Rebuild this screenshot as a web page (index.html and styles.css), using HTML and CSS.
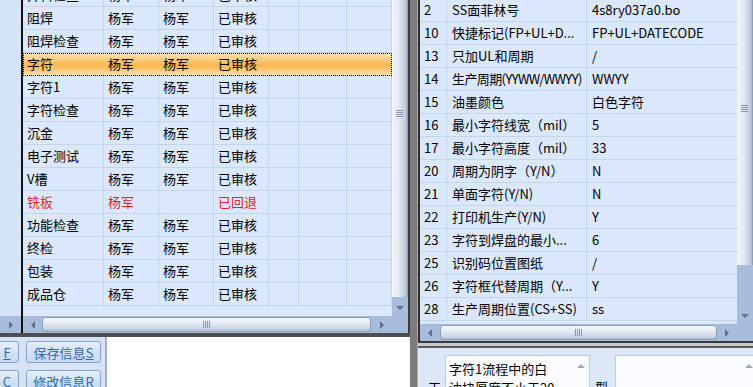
FILE: index.html
```html
<!DOCTYPE html>
<html>

<head>
    <title>流程审核</title>
    <link rel="stylesheet" href="styles.css">
</head>

<body>
    <div class="app">
        <div class="left-pane">
            <div class="left-top">
                <div class="side-strip">
                    <div class="side-fill"></div>
                    <div class="side-scroll"><span class="tri tri-right"></span></div>
                </div>
                <div class="grid-box">
                    <div class="grid-main">
                        <div class="grid-body">
                            <div class="rows">
                                <div class="row"><div class="cell">开料检查</div><div class="cell">杨军</div><div class="cell">杨军</div><div class="cell">已审核</div><div class="cell"></div><div class="cell"></div><div class="cell"></div></div>
                                <div class="row"><div class="cell">阻焊</div><div class="cell">杨军</div><div class="cell">杨军</div><div class="cell">已审核</div><div class="cell"></div><div class="cell"></div><div class="cell"></div></div>
                                <div class="row"><div class="cell">阻焊检查</div><div class="cell">杨军</div><div class="cell">杨军</div><div class="cell">已审核</div><div class="cell"></div><div class="cell"></div><div class="cell"></div></div>
                                <div class="row current"><div class="cell">字符</div><div class="cell">杨军</div><div class="cell">杨军</div><div class="cell">已审核</div><div class="cell"></div><div class="cell"></div><div class="cell"></div></div>
                                <div class="row"><div class="cell">字符1</div><div class="cell">杨军</div><div class="cell">杨军</div><div class="cell">已审核</div><div class="cell"></div><div class="cell"></div><div class="cell"></div></div>
                                <div class="row"><div class="cell">字符检查</div><div class="cell">杨军</div><div class="cell">杨军</div><div class="cell">已审核</div><div class="cell"></div><div class="cell"></div><div class="cell"></div></div>
                                <div class="row"><div class="cell">沉金</div><div class="cell">杨军</div><div class="cell">杨军</div><div class="cell">已审核</div><div class="cell"></div><div class="cell"></div><div class="cell"></div></div>
                                <div class="row"><div class="cell">电子测试</div><div class="cell">杨军</div><div class="cell">杨军</div><div class="cell">已审核</div><div class="cell"></div><div class="cell"></div><div class="cell"></div></div>
                                <div class="row"><div class="cell">V槽</div><div class="cell">杨军</div><div class="cell">杨军</div><div class="cell">已审核</div><div class="cell"></div><div class="cell"></div><div class="cell"></div></div>
                                <div class="row returned"><div class="cell">铣板</div><div class="cell">杨军</div><div class="cell"></div><div class="cell">已回退</div><div class="cell"></div><div class="cell"></div><div class="cell"></div></div>
                                <div class="row"><div class="cell">功能检查</div><div class="cell">杨军</div><div class="cell">杨军</div><div class="cell">已审核</div><div class="cell"></div><div class="cell"></div><div class="cell"></div></div>
                                <div class="row"><div class="cell">终检</div><div class="cell">杨军</div><div class="cell">杨军</div><div class="cell">已审核</div><div class="cell"></div><div class="cell"></div><div class="cell"></div></div>
                                <div class="row"><div class="cell">包装</div><div class="cell">杨军</div><div class="cell">杨军</div><div class="cell">已审核</div><div class="cell"></div><div class="cell"></div><div class="cell"></div></div>
                                <div class="row"><div class="cell">成品仓</div><div class="cell">杨军</div><div class="cell">杨军</div><div class="cell">已审核</div><div class="cell"></div><div class="cell"></div><div class="cell"></div></div>
                            </div>
                        </div>
                        <div class="vscroll left-vscroll">
                            <div class="vthumb"><span class="grip-v"><i></i><i></i><i></i><i></i></span></div>
                            <div class="vtrack"><div class="arrow-box"><span class="tri tri-down"></span></div></div>
                        </div>
                    </div>
                    <div class="hscroll-row">
                        <div class="hscroll">
                            <div class="harrow harrow-l"><span class="tri tri-left"></span></div>
                            <div class="hthumb left-hthumb"><span class="grip-h"><i></i><i></i><i></i><i></i></span></div>
                            <div class="harrow harrow-r"><span class="tri tri-right"></span></div>
                        </div>
                        <div class="corner"></div>
                    </div>
                </div>
            </div>
            <div class="left-bottom">
                <div class="btn-col">
                    <div class="btn-row">
                        <button class="btn btn-cut"><u>F</u></button>
                        <button class="btn">保存信息<u>S</u></button>
                    </div>
                    <div class="btn-row">
                        <button class="btn btn-cut"><u>C</u></button>
                        <button class="btn">修改信息<u>R</u></button>
                    </div>
                </div>
                <div class="blank"></div>
            </div>
        </div>

        <div class="splitter"></div>

        <div class="right-pane">
            <div class="right-top">
                <div class="rgrid-main">
                    <div class="rgrid-body">
                        <div class="rrows">
                            <div class="rrow"><div class="cell">2</div><div class="cell">SS面菲林号</div><div class="cell">4s8ry037a0.bo</div></div>
                            <div class="rrow"><div class="cell">10</div><div class="cell">快捷标记(FP+UL+D...</div><div class="cell">FP+UL+DATECODE</div></div>
                            <div class="rrow"><div class="cell">13</div><div class="cell">只加UL和周期</div><div class="cell">/</div></div>
                            <div class="rrow"><div class="cell">14</div><div class="cell tight">生产周期(YYWW/WWYY)</div><div class="cell">WWYY</div></div>
                            <div class="rrow"><div class="cell">15</div><div class="cell">油墨颜色</div><div class="cell">白色字符</div></div>
                            <div class="rrow"><div class="cell">16</div><div class="cell">最小字符线宽（mil）</div><div class="cell">5</div></div>
                            <div class="rrow"><div class="cell">17</div><div class="cell">最小字符高度（mil）</div><div class="cell">33</div></div>
                            <div class="rrow"><div class="cell">20</div><div class="cell">周期为阴字（Y/N）</div><div class="cell">N</div></div>
                            <div class="rrow"><div class="cell">21</div><div class="cell">单面字符(Y/N)</div><div class="cell">N</div></div>
                            <div class="rrow"><div class="cell">22</div><div class="cell">打印机生产(Y/N)</div><div class="cell">Y</div></div>
                            <div class="rrow"><div class="cell">23</div><div class="cell">字符到焊盘的最小...</div><div class="cell">6</div></div>
                            <div class="rrow"><div class="cell">25</div><div class="cell">识别码位置图纸</div><div class="cell">/</div></div>
                            <div class="rrow"><div class="cell">26</div><div class="cell">字符框代替周期（Y...</div><div class="cell">Y</div></div>
                            <div class="rrow"><div class="cell">28</div><div class="cell">生产周期位置(CS+SS)</div><div class="cell">ss</div></div>
                        </div>
                    </div>
                    <div class="vscroll right-vscroll">
                        <div class="vthumb"><span class="grip-v"><i></i><i></i><i></i><i></i></span></div>
                        <div class="vtrack"><div class="arrow-box"><span class="tri tri-down"></span></div></div>
                    </div>
                </div>
                <div class="hscroll-row">
                    <div class="hscroll rhscroll">
                        <div class="harrow rharrow"><span class="tri tri-left"></span></div>
                        <div class="hthumb right-hthumb"><span class="grip-h"><i></i><i></i><i></i><i></i></span></div>
                        <div class="harrow rharrow"><span class="tri tri-right"></span></div>
                    </div>
                    <div class="corner"></div>
                </div>
            </div>
            <div class="band"></div>
            <div class="rbottom">
                <div class="field-label">工</div>
                <div class="memo">
                    <div class="memo-text">字符1流程中的白油块厚度不小于20</div>
                    <div class="memo-bar"><span class="tri tri-up"></span></div>
                </div>
                <div class="field-label label-type">型</div>
                <div class="memo memo-wide">
                    <div class="memo-text"></div>
                    <div class="memo-bar"><span class="tri tri-up"></span></div>
                </div>
            </div>
        </div>
    </div>
</body>

</html>
```

FILE: styles.css
```css
* {
    box-sizing: border-box;
}

body {
    margin: 0;
    font-family: "Noto Sans CJK SC", "Liberation Sans", sans-serif;
    font-size: 13px;
    color: #000;
    background: #7c7c7c;
}

.app {
    display: flex;
    width: 753px;
    height: 387px;
    overflow: hidden;
}

/* left pane */
.left-pane {
    width: 410px;
    flex-shrink: 0;
    display: flex;
    flex-direction: column;
}

.left-top {
    height: 337px;
    display: flex;
    border-bottom: 4px solid #4e4e4e;
}

.side-strip {
    width: 21px;
    display: flex;
    flex-direction: column;
    background: #d4e3f7;
}

.side-fill {
    flex: 1;
}

.side-scroll {
    height: 17px;
    background: #a8bddb;
    display: flex;
    align-items: center;
    justify-content: center;
}

.grid-box {
    width: 389px;
    display: flex;
    flex-direction: column;
    border-left: 2px solid #111;
    border-right: 2px solid #3a3a3a;
}

.grid-main {
    height: 316px;
    display: flex;
}

.grid-body {
    width: 369px;
    overflow: hidden;
    background: #dbe8fb;
}

.rows {
    margin-top: -16px;
}

.row {
    display: grid;
    grid-template-columns: 81px 55px 55px 55px 30px 48px 45px;
    height: 23px;
    border-bottom: 1px solid #c4d4ec;
}

.cell {
    border-right: 1px solid #c4d4ec;
    padding-left: 4px;
    line-height: 22px;
    white-space: nowrap;
    overflow: hidden;
}

.row.current {
    background: linear-gradient(to bottom, #fde4b6 0%, #fbc46a 40%, #f8b650 55%, #fbd08a 85%, #fde0a8 100%);
    outline: 1px dotted #000;
    outline-offset: -1px;
}

.row.current .cell {
    border-right-color: transparent;
}

.row.returned {
    color: #e3232c;
}

/* scrollbars */
.vscroll {
    width: 16px;
    display: flex;
    flex-direction: column;
    background: #a8bddb;
}

.vthumb {
    background: linear-gradient(to right, #f3f6fa 0%, #e3e9f2 45%, #c3cfdf 85%, #a9b8cd 100%);
    border-right: 1px solid #8d9db6;
    display: flex;
    justify-content: center;
}

.left-vscroll .vthumb {
    height: 297px;
    padding-top: 110px;
}

.right-vscroll .vthumb {
    height: 265px;
    padding-top: 105px;
}

.vtrack {
    flex: 1;
    display: flex;
    flex-direction: column;
    justify-content: flex-end;
}

.arrow-box {
    height: 16px;
    display: flex;
    align-items: center;
    justify-content: center;
}

.grip-v {
    display: flex;
    flex-direction: column;
    gap: 1px;
}

.grip-v i {
    display: block;
    width: 7px;
    height: 1px;
    background: #8798b2;
}

.grip-h {
    display: flex;
    gap: 1px;
}

.grip-h i {
    display: block;
    width: 1px;
    height: 7px;
    background: #8798b2;
}

.hscroll-row {
    height: 17px;
    display: flex;
}

.hscroll {
    width: 369px;
    display: flex;
    background: #a8bddb;
}

.harrow {
    display: flex;
    align-items: center;
    justify-content: center;
}

.harrow-l {
    width: 19px;
}

.harrow-r {
    width: 21px;
}

.hthumb {
    height: 15px;
    margin-top: 1px;
    border: 1px solid #8a9dbb;
    border-radius: 3px;
    background: linear-gradient(to bottom, #f4f7fb 0%, #e4eaf3 45%, #c6d2e2 85%, #b1c0d4 100%);
    display: flex;
    align-items: center;
    justify-content: center;
}

.left-hthumb {
    width: 329px;
}

.corner {
    width: 16px;
    background: #a8bddb;
}

.tri {
    display: block;
    width: 0;
    height: 0;
}

.tri-down {
    border-left: 4px solid transparent;
    border-right: 4px solid transparent;
    border-top: 4px solid #5d7091;
}

.tri-up {
    border-left: 4px solid transparent;
    border-right: 4px solid transparent;
    border-bottom: 4px solid #a3abb7;
}

.tri-left {
    border-top: 4px solid transparent;
    border-bottom: 4px solid transparent;
    border-right: 4px solid #5d7091;
}

.tri-right {
    border-top: 4px solid transparent;
    border-bottom: 4px solid transparent;
    border-left: 4px solid #5d7091;
}

/* left bottom buttons */
.left-bottom {
    flex: 1;
    display: flex;
}

.btn-col {
    width: 107px;
    padding-top: 4px;
    background: #d6e3f5;
    border-right: 2px solid #a3aec0;
    overflow: hidden;
}

.btn-row {
    display: flex;
    gap: 7px;
    height: 22px;
    margin-bottom: 7px;
}

.btn {
    width: 75px;
    height: 22px;
    padding: 0;
    font-family: inherit;
    font-size: 13px;
    color: #3567ad;
    background: linear-gradient(to bottom, #e6effa, #d3e2f5 50%, #c6d9f1);
    border: 1px solid #86a2c9;
    border-radius: 3px;
    flex-shrink: 0;
}

.btn-cut {
    width: 24px;
    margin-left: -5px;
}

.blank {
    flex: 1;
    background: #fff;
}

.splitter {
    width: 8px;
    flex-shrink: 0;
    background: #7c7c7c;
    border-right: 1px solid #a9a9a9;
}

/* right pane */
.right-pane {
    width: 335px;
    flex-shrink: 0;
    display: flex;
    flex-direction: column;
}

.right-top {
    height: 343px;
    display: flex;
    flex-direction: column;
    border-left: 2px solid #2f2f2f;
    border-bottom: 2px solid #3a3a3a;
}

.rgrid-main {
    height: 324px;
    display: flex;
}

.rgrid-body {
    width: 317px;
    overflow: hidden;
    background: #dbe8fb;
}

.rrows {
    margin-top: -1px;
}

.rrow {
    display: grid;
    grid-template-columns: 27px 140px 150px;
    height: 23px;
    border-bottom: 1px solid #c4d4ec;
}

.rrow .cell {
    padding-left: 5px;
}

.rrow .cell:first-child {
    padding-left: 4px;
}

.rrow .cell:last-child {
    border-right: none;
}

.rrow .cell.tight {
    letter-spacing: -0.6px;
}

.rhscroll {
    width: 317px;
}

.rharrow {
    width: 20px;
}

.right-hthumb {
    width: 277px;
}

.band {
    height: 5px;
    background: #c9c9c9;
    border-bottom: 2px solid #5a5a5a;
}

.rbottom {
    flex: 1;
    display: flex;
    padding: 7px 0 0 10px;
    background: #dce8f8;
    overflow: hidden;
}

.field-label {
    width: 17px;
    flex-shrink: 0;
    padding-top: 24px;
    line-height: 15px;
}

.label-type {
    width: 25px;
    padding-left: 5px;
}

.memo {
    width: 145px;
    flex-shrink: 0;
    display: flex;
    background: #f8fafd;
    border: 1px solid #b9c9df;
    border-bottom: none;
}

.memo-text {
    flex: 1;
    padding: 3px 14px 0 3px;
    line-height: 19px;
}

.memo-bar {
    width: 16px;
    display: flex;
    justify-content: center;
    padding-top: 8px;
}

.memo-wide {
    width: 143px;
}
```
